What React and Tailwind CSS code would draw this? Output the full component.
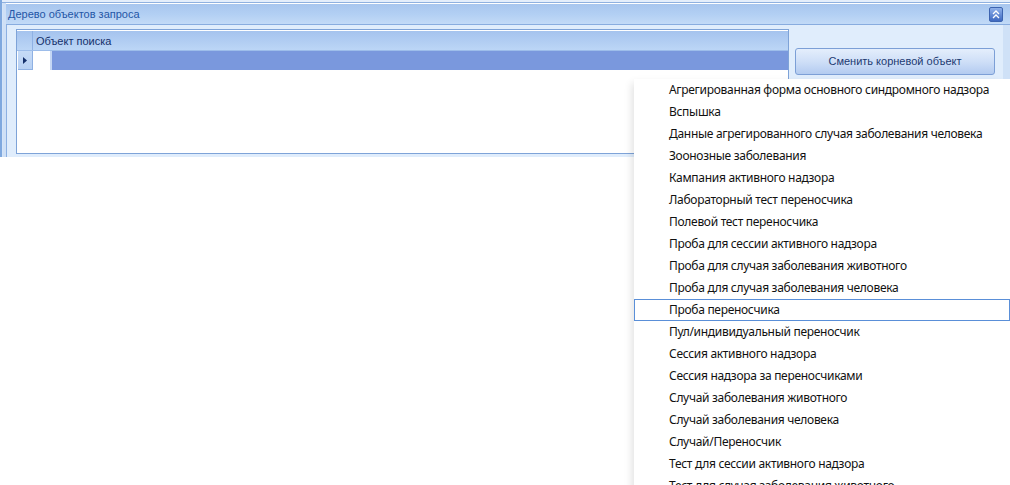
const items = [
  "Агрегированная форма основного синдромного надзора",
  "Вспышка",
  "Данные агрегированного случая заболевания человека",
  "Зоонозные заболевания",
  "Кампания активного надзора",
  "Лабораторный тест переносчика",
  "Полевой тест переносчика",
  "Проба для сессии активного надзора",
  "Проба для случая заболевания животного",
  "Проба для случая заболевания человека",
  "Проба переносчика",
  "Пул/индивидуальный переносчик",
  "Сессия активного надзора",
  "Сессия надзора за переносчиками",
  "Случай заболевания животного",
  "Случай заболевания человека",
  "Случай/Переносчик",
  "Тест для сессии активного надзора",
  "Тест для случая заболевания животного",
];

function CollapseIcon() {
  return (
    <div className="w-[14px] h-[15px] rounded-[2px] border border-[#3d64b0] bg-gradient-to-b from-[#8fb0ea] to-[#3f69c0] flex items-center justify-center">
      <svg width="8" height="9" viewBox="0 0 8 9" fill="none" stroke="white" strokeWidth="1.3">
        <path d="M1 4 L4 1 L7 4" />
        <path d="M1 8 L4 5 L7 8" />
      </svg>
    </div>
  );
}

export default function App() {
  return (
    <div className="relative w-[1010px] h-[485px] bg-white overflow-hidden" style={{ fontFamily: '"Liberation Sans", Arial, sans-serif' }}>
      {/* panel */}
      <div className="h-[157px] flex flex-col border-l-[2px] border-[#7fa8de] bg-[#d4e4f8]">
        <div className="h-[3px] bg-[#e4eefb] border-b border-[#8fb1e0]" />
        <div className="flex-1 flex flex-col ml-[1px] border-l-[3px] border-l-[#cfe0f6] bg-[#e0edfc]">
          <div className="h-[22px] flex items-center justify-between pl-[2px] pr-[7px] border-t border-white border-b border-b-[#88acdf] bg-gradient-to-b from-[#a8c6ee] via-[#b2cff3] to-[#c2daf7]">
            <span className="text-[11px] text-[#2456a6]">Дерево объектов запроса</span>
            <CollapseIcon />
          </div>
          <div className="flex-1 flex border-l border-[#8cb0e2] border-r-[7px] border-r-[#cfe1f7] pl-[9px] pt-[4px] pb-[3px]">
            <div className="w-[773px] border border-[#7ea3d8] bg-white flex flex-col">
              <div className="h-[21px] flex border-t border-white bg-gradient-to-b from-[#a5c3ee] to-[#bcd6f6] border-b border-b-[#9dbdea]">
                <div className="w-[15px] border-r border-[#8fb1e3] ml-[1px]" />
                <span className="pl-[3px] text-[11px] leading-[20px] text-[#15306b]">Объект поиска</span>
              </div>
              <div className="h-[19px] flex">
                <div className="w-[15px] ml-[1px] bg-gradient-to-b from-[#c6dbf7] to-[#b8d1f3] border-r border-b border-[#8fb1e3] flex items-center justify-center">
                  <svg width="4" height="7" viewBox="0 0 4 7"><path d="M0 0 L4 3.5 L0 7 Z" fill="#15306b" /></svg>
                </div>
                <div className="w-[17px]" />
                <div className="flex-1 bg-[#7a98dd] border-l-[2px] border-[#c5d7f4]" />
              </div>
            </div>
            <div className="flex-1 pl-[6px] pt-[19px] pr-[1px]">
              <button className="w-[200px] h-[27px] rounded-[3px] border border-[#7c9fd6] bg-gradient-to-b from-[#e4eefc] via-[#cfdff7] to-[#b3cbf0] text-[11px] text-[#1d3a72]">
                Сменить корневой объект
              </button>
            </div>
          </div>
        </div>
      </div>

      {/* dropdown list */}
      <div className="absolute left-[634px] top-[79px] w-[376px] h-[420px] bg-white shadow-[-6px_0_8px_-4px_rgba(0,0,0,0.12)] flex flex-col">
        {items.map((t, i) => (
          <div
            key={t}
            className={
              i === 10
                ? "h-[22px] shrink-0 flex items-center pl-[34px] border border-[#5a8fd8] text-[12px] tracking-[-0.3px] text-[#111]"
                : "h-[22px] shrink-0 flex items-center pl-[35px] text-[12px] tracking-[-0.3px] text-[#111]"
            }
            style={{ fontFamily: '"Noto Sans", "Liberation Sans", sans-serif' }}
          >
            {t}
          </div>
        ))}
      </div>
    </div>
  );
}
